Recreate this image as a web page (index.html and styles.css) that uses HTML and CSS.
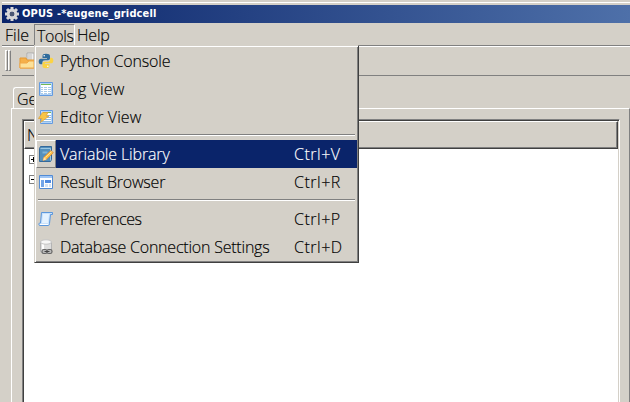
FILE: index.html
```html
<!DOCTYPE html>
<html lang="en">
<head>
<meta charset="utf-8">
<title>OPUS</title>
<link rel="stylesheet" href="styles.css">
</head>
<body>
<div class="window">
  <header class="titlebar">
    <svg class="gear" width="16" height="16" viewBox="0 0 16 16"><g stroke="#d8d8d8" stroke-width="3"><path d="M8 1v14M1 8h14M3 3l10 10M13 3L3 13"/></g><circle cx="8" cy="8" r="3.800" fill="#14296a" stroke="#d8d8d8" stroke-width="3"/><circle cx="8" cy="8" r="2.300" fill="#4c5874"/></svg>
    <span class="title">OPUS -*eugene_gridcell</span>
  </header>
  <nav class="menubar">
    <span class="menu-title file">File</span>
    <span class="menu-title tools">Tools</span>
    <span class="menu-title help">Help</span>
  </nav>
  <div class="toolbar">
    <i class="grip"></i><i class="grip"></i>
    <svg class="folder" width="16" height="18" viewBox="0 0 16 18"><path d="M8 1h7v8H8z" fill="#eee" stroke="#aaa"/><path d="M10 2v6M12 2v6" stroke="#bbb"/><path d="M1 6h6l1 2h7v8H1z" fill="#f5b04a" stroke="#e59a35"/><path d="M1 11h7l2-2h5v7H1z" fill="#fce19a" stroke="#f0a848"/></svg>
  </div>
  <div class="tabs"><span class="tab">Ge</span></div>
  <main class="pane">
    <div class="tree">
      <div class="tree-head">N</div>
      <div class="tree-body">
        <div class="node plus"></div>
        <div class="node"></div>
      </div>
    </div>
  </main>
</div>

<div class="menu">
  <div class="item"><span class="icon">
    <svg width="16" height="16" viewBox="0 0 16 16"><path d="M8 .8c-2.500 0-3.500.7-3.500 2.200V5H9v.7H3C1.400 5.700.7 7 .7 8.600s.7 2.700 2 2.700h1.700V9.500C4.400 8 5.300 7.300 7 7.300h3c1.200 0 2-.8 2-2V3C12 1.500 10.800.8 8 .8z" fill="#316c9c"/><path d="M8 15.200c2.500 0 3.500-.7 3.500-2.200v-2H7v-.7h6c1.600 0 2.300-1.300 2.300-2.900s-.7-2.700-2-2.700h-1.200v1.800c0 1.500-.9 2.200-2.600 2.200H6.500c-1.200 0-2 .8-2 2V13c0 1.500 1 2.200 3.500 2.200z" fill="#fbd344"/><circle cx="6.200" cy="2.800" r=".8" fill="#fff"/><circle cx="9.800" cy="13.200" r=".8" fill="#fff"/></svg></span><span class="label python">Python Console</span></div>
  <div class="item"><span class="icon">
    <svg width="16" height="16" viewBox="0 0 16 16"><path d="M1.500 1.500h13v13h-13z" fill="#fff" stroke="#639be0"/><path d="M2.500 2.500h11v11h-11z" fill="none" stroke="#b4d2f5"/><path d="M3 3.500h10" stroke="#72b956"/><path d="M3 6.500h2m1 0h3m1 0h3M3 8.500h2m1 0h3m1 0h3M3 10.500h2m1 0h3m1 0h3M3 12.500h2m1 0h3m1 0h3" stroke="#a8cae8"/></svg></span><span class="label log">Log View</span></div>
  <div class="item"><span class="icon">
    <svg width="16" height="16" viewBox="0 0 16 16"><path d="M2.500 1.500h12v13h-12z" fill="#fff" stroke="#639be0"/><path d="M3.500 2.500h10v11h-10z" fill="none" stroke="#b4d2f5"/><path d="M5 3.500h8" stroke="#72b956"/><path d="M9 6.500h4M9 8.500h4M4 10.500h9M4 12.500h9" stroke="#8ebbe4"/><path d="M4.500 3.500H10L8 7h3L2.500 13.500 4 9.500H.5z" fill="#f8c545" stroke="#e0a23a" stroke-width=".8"/></svg></span><span class="label editor">Editor View</span></div>
  <div class="separator"></div>
  <div class="item active"><span class="icon">
    <svg width="16" height="16" viewBox="0 0 16 16"><path d="M1.500 2.500l1-2h11v13l-1 2h-11z" fill="#5490be" stroke="#34699b"/><path d="M2.500 2.500h10v12" fill="none" stroke="#9cc7e2"/><path d="M4.500 5.500h5v2h-5z" fill="#80b4d8"/><path d="M5 14.500l1-3.500 7-6.500 2.300 2.300-7 6.700z" fill="#ffc04a" stroke="#dc8931" stroke-width=".8"/><path d="M5 14.500l1-3.500 2.500 2.400z" fill="#f7e1b5"/><path d="M7.500 11.500l6-6" stroke="#ffe590"/></svg></span><span class="label library">Variable Library</span><span class="key">Ctrl+V</span></div>
  <div class="item"><span class="icon">
    <svg width="16" height="16" viewBox="0 0 16 16"><path d="M1.500 1.500h13v13h-13z" fill="#fff" stroke="#528bd4"/><path d="M2 2h12v2H2z" fill="#9fc5f5"/><path d="M3 6h3v7H3z" fill="#73a5e8"/><path d="M7 6h6v3H7z" fill="#4f8ae0"/><path d="M7 10h3v3H7zm4 0h2v3h-2z" fill="#d4e3f5"/></svg></span><span class="label result">Result Browser</span><span class="key">Ctrl+R</span></div>
  <div class="separator"></div>
  <div class="item"><span class="icon">
    <svg width="16" height="16" viewBox="0 0 16 16"><path d="M3.500 1.500h11v2h-2l-1 9c0 1.500-.5 2-1.500 2H1.500c-.8-.8-.8-1.500 0-2.500h1z" fill="#c8e1fb" stroke="#5b97dc"/><path d="M5 3h6l-1 9H4z" fill="#e4f2ff"/><path d="M2 13.500h8" stroke="#fff"/></svg></span><span class="label prefs">Preferences</span><span class="key">Ctrl+P</span></div>
  <div class="item"><span class="icon">
    <svg width="16" height="16" viewBox="0 0 16 16"><path d="M2.500 3v9c0 3 11 3 11 0V3z" fill="#dedede" stroke="#b4b4b4"/><path d="M5 5v7" stroke="#fff" stroke-width="2"/><ellipse cx="8" cy="3" rx="5.500" ry="2.200" fill="#f7f7f7" stroke="#c4c4c4"/><rect x="4" y="10.500" width="5" height="4" rx="1.800" fill="#bbb" stroke="#666" stroke-width="1.200"/><rect x="9" y="10.500" width="5" height="4" rx="1.800" fill="#bbb" stroke="#666" stroke-width="1.200"/><path d="M6.500 12.500h5" stroke="#444"/></svg></span><span class="label database">Database Connection Settings</span><span class="key">Ctrl+D</span></div>
</div>
</body>
</html>
```
FILE: styles.css
```css
*, *::before { box-sizing: border-box; }
body {
  margin: 0;
  width: 630px;
  height: 402px;
  overflow: hidden;
  background: #d4d0c8;
  color: #000;
  font: 300 16px/20px "Open Sans", "Noto Sans", sans-serif;
  -webkit-text-stroke: 0.15px;
  white-space: nowrap;
}
.window { display: flex; flex-direction: column; height: 402px; padding-top: 2px; }
.titlebar {
  height: 21px;
  flex: none;
  margin-left: 2px;
  display: flex;
  align-items: center;
  border-top: 1px solid #fff;
  padding: 2px 0 0 2px;
  background: linear-gradient(90deg, #0a246a, #4e70a9) 0 2px no-repeat;
  color: #fff;
}
.title { font: bold 11px/16px "DejaVu Sans Condensed", "DejaVu Sans", sans-serif; letter-spacing: 0.13px; margin-left: 2px; -webkit-text-stroke: 0; }
.menubar {
  height: 24px;
  flex: none;
  display: flex;
  margin-left: 2px;
  padding-top: 1px;
  border-bottom: 1px solid #fff;
  box-shadow: inset 0 -1px #808080;
}
.menu-title { height: 22px; line-height: 23px; }
.file { width: 32px; padding-left: 3px; }
.tools { width: 41px; padding-left: 2px; border: 1px solid; border-color: #808080 #fff #fff #808080; line-height: 22px; letter-spacing: -0.3px; }
.help { padding-left: 2px; letter-spacing: -0.2px; }
.toolbar { height: 29px; flex: none; margin-left: 2px; padding: 3px 0 0 3px; display: flex; border-bottom: 1px solid #808080; }
.grip { width: 3px; height: 21px; border: 1px solid; border-color: #fff #808080 #808080 #fff; }
.folder { margin: 2px 0 0 8px; }
.tabs { height: 32px; flex: none; padding: 11px 0 0 13px; }
.tab { display: block; width: 70px; height: 21px; padding-left: 3px; border: 1px solid #fff; border-bottom: 0; border-right-color: #808080; border-radius: 3px 3px 0 0; line-height: 23px; }
.pane { flex: 1; margin-left: 11px; border: solid; border-width: 1px 1px 0; border-color: #fff #808080 #fff #fff; padding: 10px 9px 0 10px; display: flex; }
.tree { flex: 1; border: solid; border-width: 1px 1px 0; border-color: #808080 #fff #fff #808080; background: #fff; box-shadow: inset 1px 1px #404040, inset -1px 0 #d4d0c8; padding: 1px 1px 0 1px; }
.tree-head { height: 28px; padding-left: 2px; background: #d4d0c8; border: 1px solid; border-color: #fff #404040 #404040 #fff; box-shadow: inset -1px -1px #808080; line-height: 27px; }
.tree-body { padding: 6px 0 0 5px; }
.node { width: 9px; height: 9px; margin-bottom: 11px; border: 1px solid #808080; background: linear-gradient(#000, #000) center / 5px 1px no-repeat; }
.plus { background: linear-gradient(#000, #000) center / 5px 1px no-repeat, linear-gradient(#000, #000) center / 1px 5px no-repeat; }
.menu {
  position: absolute;
  left: 34px;
  top: 45px;
  width: 325px;
  height: 218px;
  padding: 1px;
  background: #d4d0c8;
  border: 1px solid;
  border-color: #d4d0c8 #404040 #404040 #d4d0c8;
  box-shadow: inset 1px 1px #fff, inset -1px -1px #808080;
}
.item { height: 28px; display: flex; align-items: center; }
.icon { width: 20px; height: 28px; display: flex; align-items: center; justify-content: center; margin-right: 4px; }
.label { flex: 1; }
.key { width: 63px; letter-spacing: 0.5px; }
.python { letter-spacing: -0.15px; }
.log { letter-spacing: 0.15px; }
.editor { letter-spacing: 0.1px; }
.library { letter-spacing: -0.13px; }
.result { letter-spacing: -0.2px; }
.prefs { letter-spacing: -0.42px; }
.database { letter-spacing: -0.22px; }
.active { color: #fff; background: linear-gradient(#0a246a, #0a246a) 20px 0 no-repeat; }
.active .icon { border: 1px solid; border-color: #fff #808080 #808080 #fff; }
.separator { height: 9px; padding: 3px 2px 0; }
.separator::before { content: ""; display: block; height: 2px; background: #808080; border-bottom: 1px solid #fff; }
```
